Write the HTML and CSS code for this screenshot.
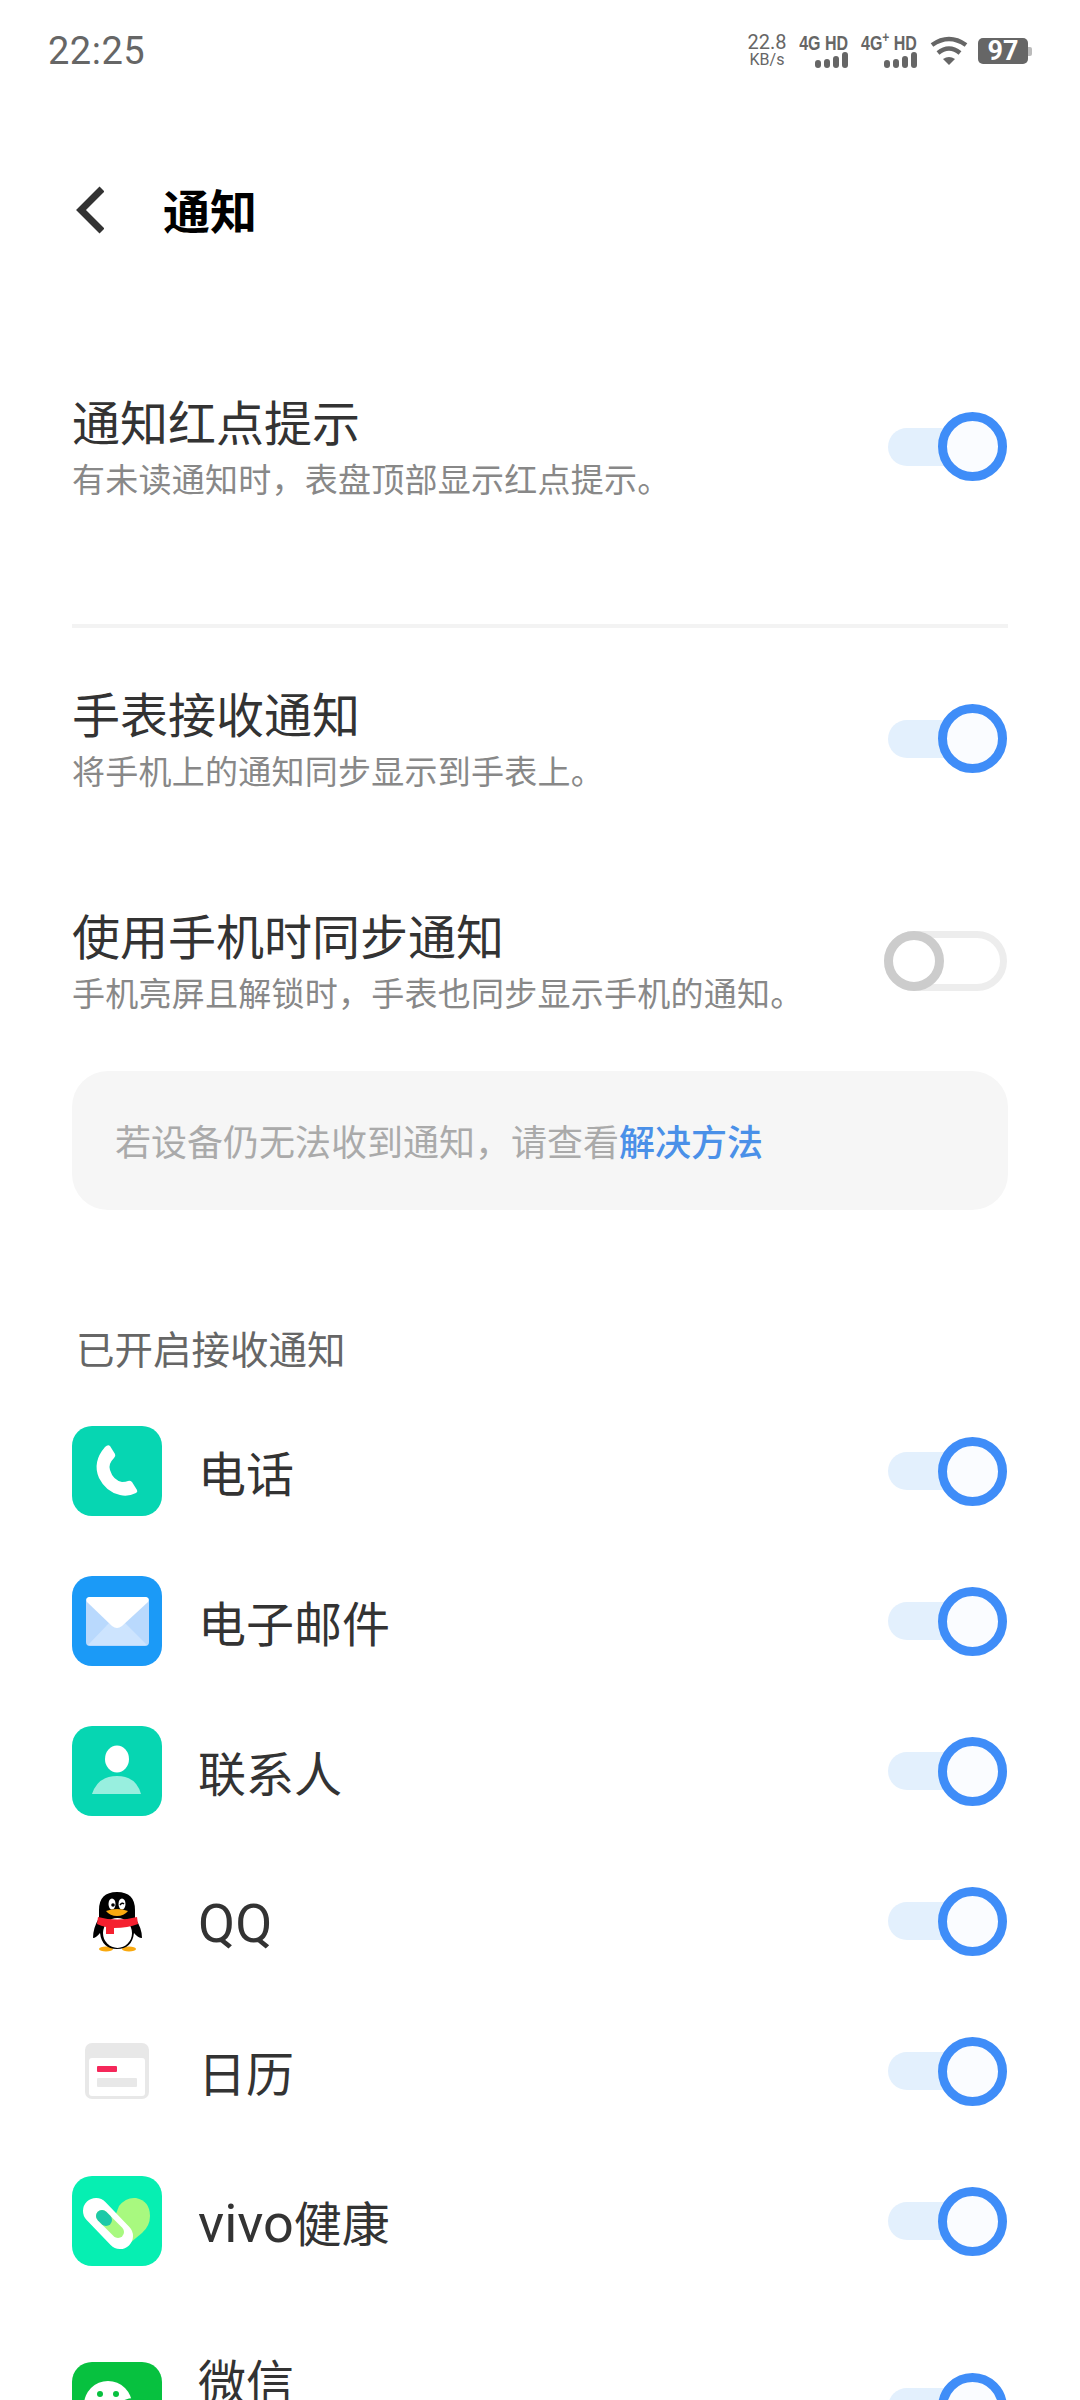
FILE: index.html
```html
<!DOCTYPE html>
<html lang="zh-CN">
<head>
    <meta charset="UTF-8">
    <meta name="viewport" content="width=device-width, initial-scale=1.0">
    <title>通知</title>
    <link rel="stylesheet" href="styles.css">
</head>
<body>
    <div class="screen">
        <div class="status-bar">
            <span class="time">22:25</span>
            <div class="status-icons">
                <div class="speed"><span>22.8</span><span class="speed-unit">KB/s</span></div>
                <div class="net net-first">
                    <span class="net-label">4G HD</span>
                    <span class="bars"><i class="b1"></i><i class="b2"></i><i class="b3"></i><i class="b4"></i></span>
                </div>
                <div class="net net-second">
                    <span class="net-label">4G<sup>+</sup> HD</span>
                    <span class="bars"><i class="b1"></i><i class="b2"></i><i class="b3"></i><i class="b4"></i></span>
                </div>
                <svg class="wifi" width="38" height="30" viewBox="0 0 38 30">
                    <path d="M2 9 Q19 -3 36 9" fill="none" stroke="#666" stroke-width="4.5"/>
                    <path d="M8 17 Q19 8 30 17" fill="none" stroke="#666" stroke-width="4.5"/>
                    <path d="M19 29 L13 23 Q19 19 25 23 Z" fill="#666"/>
                </svg>
                <div class="battery"><span class="battery-level">97</span><span class="battery-tip"></span></div>
            </div>
        </div>

        <div class="title-bar">
            <svg class="back" width="32" height="48" viewBox="0 0 32 48">
                <path d="M30 3 L9 24 L30 45" fill="none" stroke="#333" stroke-width="7"/>
            </svg>
            <h1>通知</h1>
        </div>

        <div class="setting setting-first">
            <div class="setting-text">
                <div class="setting-title">通知红点提示</div>
                <div class="setting-desc">有未读通知时，表盘顶部显示红点提示。</div>
            </div>
            <span class="switch on"></span>
        </div>

        <div class="divider"></div>

        <div class="setting setting-second">
            <div class="setting-text">
                <div class="setting-title">手表接收通知</div>
                <div class="setting-desc">将手机上的通知同步显示到手表上。</div>
            </div>
            <span class="switch on"></span>
        </div>

        <div class="setting setting-third">
            <div class="setting-text">
                <div class="setting-title">使用手机时同步通知</div>
                <div class="setting-desc">手机亮屏且解锁时，手表也同步显示手机的通知。</div>
            </div>
            <span class="switch off"></span>
        </div>

        <div class="help-box">若设备仍无法收到通知，请查看<span class="help-link">解决方法</span></div>

        <div class="section-title">已开启接收通知</div>

        <div class="app-list">
            <div class="app-row">
                <svg class="app-icon" viewBox="0 0 90 90">
                    <rect width="90" height="90" rx="20" fill="#06d6b2"/>
                    <path d="M33 21 Q36 18 38 20 L43 28 Q44 30 42 32 Q36 38 38 44 Q41 54 50 56 Q54 56 56 55 Q58 54 60 56 L65 64 Q66 66 64 67 Q56 71 48 69 Q34 66 27 52 Q20 36 33 21 Z" fill="#fff"/>
                </svg>
                <span class="app-name">电话</span>
                <span class="switch on"></span>
            </div>
            <div class="app-row">
                <svg class="app-icon" viewBox="0 0 90 90">
                    <rect width="90" height="90" rx="20" fill="#1b9af7"/>
                    <rect x="14" y="21" width="63" height="49" rx="4" fill="#b9d9fd"/>
                    <path d="M16 69 L37 47 Q45 52 53 47 L75 69 Z" fill="#cde4fe"/>
                    <path d="M17 21 L74 21 Q78 22 76 26 L50 50 Q45 54 40 50 L15 26 Q13 22 17 21 Z" fill="#fff"/>
                </svg>
                <span class="app-name">电子邮件</span>
                <span class="switch on"></span>
            </div>
            <div class="app-row">
                <svg class="app-icon" viewBox="0 0 90 90">
                    <rect width="90" height="90" rx="20" fill="#06d6b2"/>
                    <ellipse cx="45" cy="33" rx="12" ry="13.5" fill="#fff"/>
                    <path d="M20 68 Q26 50 45 50 Q64 50 69 68 Z" fill="#98efdf"/>
                </svg>
                <span class="app-name">联系人</span>
                <span class="switch on"></span>
            </div>
            <div class="app-row">
                <svg class="app-icon" viewBox="0 0 90 90">
                    <ellipse cx="34" cy="73" rx="7" ry="2.5" fill="#f9a90f"/>
                    <ellipse cx="57" cy="73" rx="7" ry="2.5" fill="#f9a90f"/>
                    <path d="M27 34 Q27 16 45 16 Q63 16 63 34 L63 42 Q70 52 70 62 Q66 62 62 57 Q60 73 45 73 Q30 73 28 57 Q24 62 21 62 Q21 52 27 42 Z" fill="#000"/>
                    <ellipse cx="45.5" cy="57" rx="14.5" ry="15" fill="#fff"/>
                    <ellipse cx="40" cy="28" rx="3.5" ry="5.5" fill="#fff"/>
                    <ellipse cx="50" cy="28" rx="3.5" ry="5.5" fill="#fff"/>
                    <circle cx="41" cy="29" r="1.8" fill="#000"/>
                    <path d="M48 29 Q50 26 52 28" fill="none" stroke="#000" stroke-width="1.4"/>
                    <path d="M34 35 Q45 31 56 35 Q52 40 45 40 Q38 40 34 35 Z" fill="#f9a90f"/>
                    <path d="M26 41 Q45 46 65 41 L66 48 Q56 52 42 52 L42 58 L34 58 L34 51 Q29 50 25 48 Z" fill="#f5202f"/>
                </svg>
                <span class="app-name app-name-latin"><span class="latin">QQ</span></span>
                <span class="switch on"></span>
            </div>
            <div class="app-row">
                <svg class="app-icon" viewBox="0 0 90 90">
                    <rect x="13" y="17" width="64" height="56" rx="7" fill="#e8e8e8"/>
                    <rect x="17" y="32" width="56" height="38" rx="3" fill="#fff"/>
                    <rect x="25" y="40" width="20" height="6" rx="1" fill="#f5285a"/>
                    <rect x="25" y="52" width="40" height="9" rx="1" fill="#e8e8e8"/>
                </svg>
                <span class="app-name">日历</span>
                <span class="switch on"></span>
            </div>
            <div class="app-row">
                <svg class="app-icon" viewBox="0 0 90 90">
                    <rect width="90" height="90" rx="20" fill="#06efb2"/>
                    <path d="M47 30 Q54 21 64 22 Q78 25 78 40 Q78 50 70 57 L58 67 L40 48 Z" fill="#a8f97f"/>
                    <path d="M24 35 L48 60" fill="none" stroke="#fff" stroke-width="26" stroke-linecap="round"/>
                    <path d="M30 40 L46 56" fill="none" stroke="#a8f97f" stroke-width="12" stroke-linecap="round"/>
                    <path d="M30 40 L34 44" fill="none" stroke="#1cc9a8" stroke-width="12" stroke-linecap="round"/>
                </svg>
                <span class="app-name"><span class="latin">vivo</span>健康</span>
                <span class="switch on"></span>
            </div>
            <div class="app-row app-row-last">
                <svg class="app-icon" viewBox="0 0 90 90">
                    <rect width="90" height="90" rx="20" fill="#07c13f"/>
                    <ellipse cx="36" cy="43" rx="24" ry="24" fill="#fff"/>
                    <circle cx="28" cy="32" r="3" fill="#07c13f"/>
                    <circle cx="44" cy="32" r="3" fill="#07c13f"/>
                    <ellipse cx="62" cy="55" rx="20" ry="18" fill="#fff" stroke="#07c13f" stroke-width="2"/>
                </svg>
                <span class="app-name">微信</span>
                <span class="switch on"></span>
            </div>
        </div>
    </div>
</body>
</html>
```

FILE: styles.css
```css
html, body {
    margin: 0;
    padding: 0;
    background-color: #fff;
}

.screen {
    width: 1080px;
    height: 2400px;
    overflow: hidden;
    font-family: Roboto, "Noto Sans CJK SC", sans-serif;
    color: #333;
}

/* Status bar */
.status-bar {
    height: 100px;
    box-sizing: border-box;
    display: flex;
    justify-content: space-between;
    align-items: center;
    padding: 2px 48px 0;
    color: #666;
}

.time {
    font-size: 38px;
    font-weight: 400;
    letter-spacing: 0.5px;
}

.status-icons {
    display: flex;
    align-items: center;
}

.speed {
    display: flex;
    flex-direction: column;
    align-items: center;
    width: 40px;
    font-size: 20px;
    line-height: 18px;
}

.speed-unit {
    font-size: 16px;
}

.net {
    display: flex;
    flex-direction: column;
    align-items: flex-end;
    margin-left: 13px;
}

.net-first {
    width: 48px;
}

.net-second {
    width: 57px;
    margin-left: 12px;
}

.net-label {
    font-family: "Liberation Sans", sans-serif;
    font-size: 20px;
    font-weight: 700;
    line-height: 16px;
    white-space: nowrap;
    transform: scaleX(0.8);
    transform-origin: right center;
}

.net-label sup {
    font-size: 15px;
    line-height: 0;
}

.bars {
    display: flex;
    align-items: flex-end;
    gap: 3px;
    height: 16px;
    margin-top: 1px;
}

.bars i {
    display: block;
    width: 6px;
    border-radius: 3px;
    background-color: #666;
}

.bars .b1 { height: 8px; }
.bars .b2 { height: 9px; }
.bars .b3 { height: 12px; }
.bars .b4 { height: 16px; }

.wifi {
    margin-left: 13px;
}

.battery {
    display: flex;
    align-items: center;
    margin-left: 10px;
}

.battery-level {
    width: 50px;
    height: 26px;
    border-radius: 5px;
    background-color: #666;
    color: #fff;
    font-size: 27px;
    font-weight: 700;
    line-height: 26px;
    text-align: center;
}

.battery-tip {
    width: 4px;
    height: 9px;
    border-radius: 0 2px 2px 0;
    background-color: #bbb;
}

/* Title */
.title-bar {
    height: 60px;
    margin-top: 81px;
    display: flex;
    align-items: center;
    padding-left: 72px;
}

.back {
    display: block;
    margin-bottom: 2px;
}

h1 {
    margin: 0 0 6px 59px;
    font-size: 47px;
    font-weight: 700;
    color: #000;
}

/* Setting rows */
.setting {
    display: flex;
    justify-content: space-between;
    align-items: center;
    padding: 0 73px 0 72px;
}

.setting .switch {
    margin-bottom: 3px;
}

.setting-first {
    margin-top: 149px;
}

.setting-second {
    margin-top: 54px;
}

.setting-third {
    margin-top: 106px;
}

.setting-title {
    padding-top: 2px;
    font-size: 48px;
    line-height: 66px;
    color: #333;
}

.setting-desc {
    padding-bottom: 2px;
    font-size: 33px;
    line-height: 46px;
    letter-spacing: 0.25px;
    color: #888;
}

.divider {
    height: 4px;
    margin: 118px 72px 0;
    background-color: #f3f3f3;
}

/* Switches */
.switch {
    position: relative;
    display: block;
    flex: none;
    box-sizing: border-box;
}

.switch::after {
    content: "";
    position: absolute;
    top: 50%;
    box-sizing: border-box;
    border-radius: 50%;
}

.switch.on {
    width: 119px;
    height: 38px;
    border-radius: 19px;
    background-color: #e3f0fd;
}

.switch.on::after {
    right: 0;
    width: 69px;
    height: 69px;
    margin-top: -34.5px;
    border: 9px solid #3f8df8;
    background-color: #fafcff;
}

.switch.off {
    width: 123px;
    height: 60px;
    border: 7px solid #ededed;
    border-radius: 30px;
    background-color: #fff;
}

.switch.off::after {
    left: -7px;
    width: 60px;
    height: 60px;
    margin-top: -30px;
    border: 9px solid #ccc;
    background-color: #fff;
}

/* Help box */
.help-box {
    height: 139px;
    margin: 51px 72px 0;
    padding-left: 43px;
    border-radius: 36px;
    background-color: #f6f6f6;
    color: #aaa;
    font-size: 36px;
    line-height: 147px;
}

.help-link {
    color: #4a90e8;
    font-weight: 500;
}

/* App list */
.section-title {
    margin: 116px 0 0 76px;
    font-size: 38.5px;
    line-height: 50px;
    color: #666;
}

.app-list {
    margin-top: 50px;
}

.app-row {
    display: flex;
    align-items: center;
    height: 90px;
    margin-bottom: 60px;
    padding: 0 73px 0 72px;
}

.app-row-last {
    margin-top: 96px;
}

.app-icon {
    flex: none;
    width: 90px;
    height: 90px;
}

.app-name {
    flex: 1;
    margin-left: 36px;
    font-size: 48px;
    color: #333;
}

.app-name-latin {
    padding-top: 5px;
}

.app-row-last .app-name {
    margin-bottom: 56px;
}

.latin {
    font-size: 54px;
}
```
